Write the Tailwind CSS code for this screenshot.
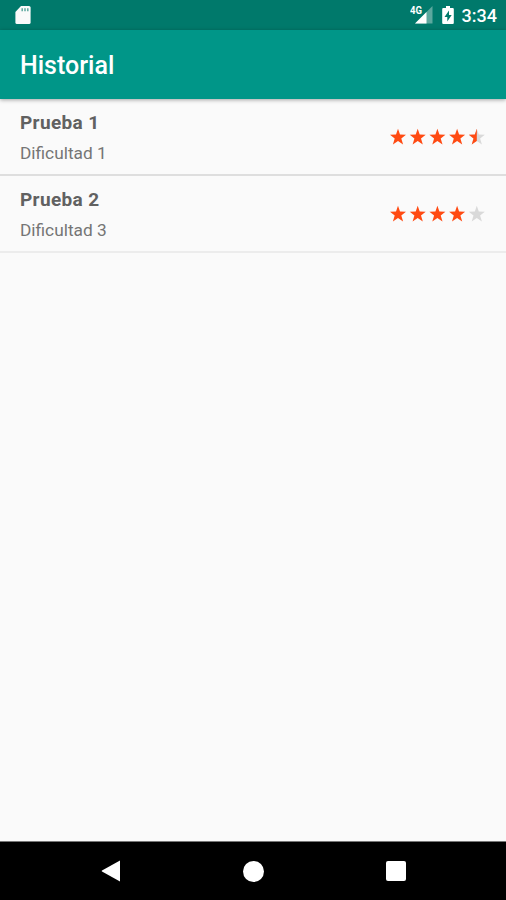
<!DOCTYPE html>
<html lang="es">
<head>
<meta charset="utf-8">
<title>Historial</title>
<script src="https://cdn.jsdelivr.net/npm/@tailwindcss/browser@4"></script>
</head>
<body class="font-[Roboto,sans-serif] bg-[#fafafa]">
<svg width="0" height="0" class="absolute">
  <defs>
    <path id="star" d="M8 -.2 L10 5.500 L16 5.800 L11.300 9.600 L13.100 15.500 L8 12.100 L2.900 15.500 L4.700 9.600 L0 5.800 L6 5.500 Z"/>
    <clipPath id="half"><rect y="-1" width="8" height="18"/></clipPath>
  </defs>
</svg>
<div class="flex h-[900px] w-[506px] flex-col overflow-hidden bg-[#fafafa]">
  <div class="flex h-[30px] shrink-0 items-center bg-[#00796b] pl-[15px] pr-[9px] text-white">
    <svg class="h-[20px] w-[16px]" viewBox="0 0 16 20"><path fill="#fafafa" d="M6 1h8q1.600 0 1.600 1.600v14.800q0 1.600-1.600 1.600H2q-1.600 0-1.600-1.600V7z"/><path stroke="#5ca89e" stroke-width="1.500" d="M7.200 3.300v3M10 3.300v3M12.800 3.300v3"/></svg>
    <div class="ml-auto flex items-center">
      <svg class="h-[20px] w-[24px]" viewBox="0 0 24 20"><path fill="#5ca89e" d="M22.500 1v17.500H5z"/><path fill="#00796b" d="M0 0h13v10H0z"/><path fill="#fff" d="M16.500 7v11.500H5z"/><text x="0" y="9" fill="#fff" font-size="10" font-weight="700" textLength="12" lengthAdjust="spacingAndGlyphs">4G</text></svg>
      <svg class="ml-[8px] h-[20px] w-[12px]" viewBox="0 0 12 20"><path fill="#fff" d="M4 1h4v2h2.700q1.100 0 1.100 1.100v13.800q0 1.100-1.100 1.100H1.300Q.2 19 .2 17.900V4.100Q.2 3 1.300 3H4z"/><path fill="#00796b" d="M7 5.500 2.500 12H5.300v4.500L9.700 10H7z"/></svg>
      <span class="ml-[8px] mt-[2px] text-[18px] font-medium leading-5">3:34</span>
    </div>
  </div>
  <header class="relative flex h-[69px] shrink-0 items-center bg-[#009688] px-5 pt-[2px] shadow-[0_1px_4px_rgba(0,0,0,0.35)]">
    <h1 class="text-[25px] font-medium leading-7 text-white">Historial</h1>
  </header>
  <main class="flex-1">
    <div class="flex h-[77px] items-center justify-between border-b-2 border-[#dedede] pl-5 pr-[20px]">
      <div class="pt-[3px]">
        <p class="text-[19px] font-bold leading-[30px] tracking-[0.35px] text-[#616161]">Prueba 1</p>
        <p class="text-[17.300px] leading-[30px] text-[#757575]">Dificultad 1</p>
      </div>
      <svg class="h-4 w-[96px] overflow-visible" viewBox="0 0 96 16" fill="#ff4a12"><use href="#star"/><use href="#star" x="19.700"/><use href="#star" x="39.400"/><use href="#star" x="59.100"/><g transform="translate(78.800)"><use href="#star" fill="#d9d9d9"/><use href="#star" clip-path="url(#half)"/></g></svg>
    </div>
    <div class="flex h-[77px] items-center justify-between border-b-2 border-[#ececec] pl-5 pr-[20px]">
      <div class="pt-[3px]">
        <p class="text-[19px] font-bold leading-[30px] tracking-[0.35px] text-[#616161]">Prueba 2</p>
        <p class="text-[17.300px] leading-[30px] text-[#757575]">Dificultad 3</p>
      </div>
      <svg class="h-4 w-[96px] overflow-visible" viewBox="0 0 96 16" fill="#ff4a12"><use href="#star"/><use href="#star" x="19.700"/><use href="#star" x="39.400"/><use href="#star" x="59.100"/><use href="#star" x="78.800" fill="#d9d9d9"/></svg>
    </div>
  </main>
  <nav class="grid h-[59px] shrink-0 grid-cols-[142px_144px_140px] justify-center border-t border-[#777] bg-black pr-px">
    <div class="flex items-center justify-center"><svg class="h-[22px] w-[20px]" viewBox="0 0 20 22"><path fill="#fff" d="M19 .5v21L1 11.500q-.7-.5 0-1z"/></svg></div>
    <div class="flex items-center justify-center"><div class="size-[21px] rounded-full bg-white"></div></div>
    <div class="flex items-center justify-center"><div class="size-[20px] rounded-[2px] bg-white"></div></div>
  </nav>
</div>
</body>
</html>
